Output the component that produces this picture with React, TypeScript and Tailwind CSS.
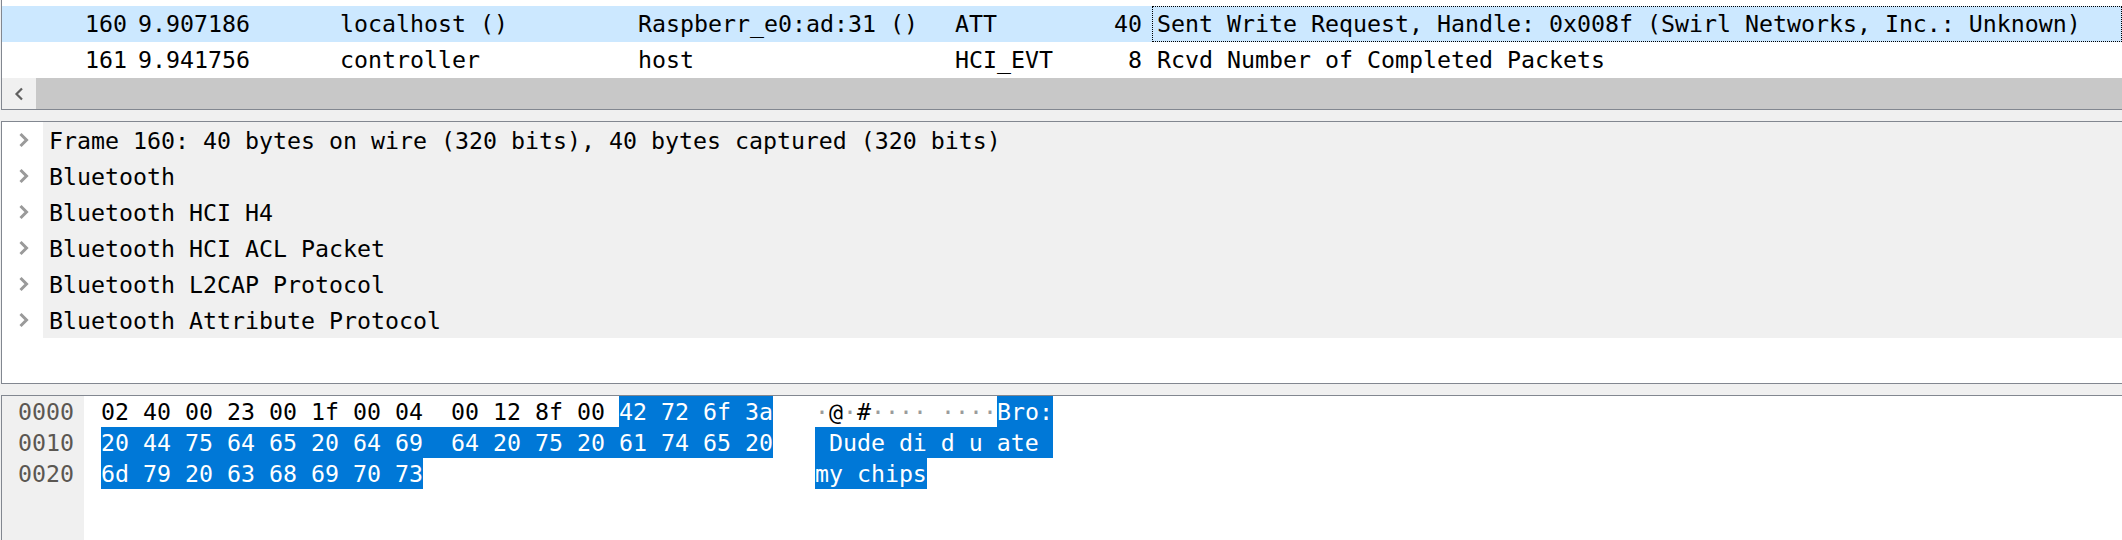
import React from "react"

type Packet = {
  no: string
  time: string
  src: string
  dst: string
  proto: string
  len: string
  info: string
  selected?: boolean
}

const packets: Packet[] = [
  {
    no: "160",
    time: "9.907186",
    src: "localhost ()",
    dst: "Raspberr_e0:ad:31 ()",
    proto: "ATT",
    len: "40",
    info: "Sent Write Request, Handle: 0x008f (Swirl Networks, Inc.: Unknown)",
    selected: true,
  },
  {
    no: "161",
    time: "9.941756",
    src: "controller",
    dst: "host",
    proto: "HCI_EVT",
    len: "8",
    info: "Rcvd Number of Completed Packets",
  },
]

const tree = [
  "Frame 160: 40 bytes on wire (320 bits), 40 bytes captured (320 bits)",
  "Bluetooth",
  "Bluetooth HCI H4",
  "Bluetooth HCI ACL Packet",
  "Bluetooth L2CAP Protocol",
  "Bluetooth Attribute Protocol",
]

function Chevron() {
  return (
    <svg width="11" height="16" viewBox="0 0 11 16" className="shrink-0">
      <polyline points="2.5,2 8.5,8 2.5,14" fill="none" stroke="#9a9a9a" strokeWidth="3" />
    </svg>
  )
}

// selected byte chunk
function Sel({ children }: { children: React.ReactNode }) {
  return <span className="inline-block bg-[#0078d7] text-white leading-[31px]">{children}</span>
}

function Dot() {
  return <span className="text-[#9b9b9b]">·</span>
}

export default function App() {
  return (
    <div className="w-[2122px] h-[540px] overflow-hidden bg-[#f0f0f0] pl-[1px] flex flex-col font-['DejaVu_Sans_Mono',monospace] text-[23.25px] text-black">
      {/* packet list */}
      <div className="h-[110px] bg-white border-l border-b border-[#828790] flex flex-col">
        <div className="h-[6px]" />
        {packets.map((p) => (
          <div
            key={p.no}
            className={`flex h-[36px] leading-[34px] whitespace-pre ${p.selected ? "bg-[#cce8ff]" : "bg-white"}`}
          >
            <div className="w-[125px] text-right leading-[36px]">{p.no}</div>
            <div className="w-[213px] pl-[11px] leading-[36px]">{p.time}</div>
            <div className="w-[298px] leading-[36px]">{p.src}</div>
            <div className="w-[317px] leading-[36px]">{p.dst}</div>
            <div className="w-[105px] leading-[36px]">{p.proto}</div>
            <div className="w-[82px] text-right leading-[36px]">{p.len}</div>
            <div
              className={`ml-[10px] flex-1 pl-[4px] border border-dotted ${p.selected ? "border-black" : "border-transparent"}`}
            >
              {p.info}
            </div>
          </div>
        ))}
        <div className="h-[31px] flex">
          <div className="w-[34px] bg-[#f0f0f0] flex items-center justify-center">
            <svg width="11" height="14" viewBox="0 0 11 14">
              <polyline points="8,1.5 2.5,7 8,12.5" fill="none" stroke="#606060" strokeWidth="2.2" />
            </svg>
          </div>
          <div className="flex-1 bg-[#c8c8c8]" />
        </div>
      </div>

      <div className="h-[11px]" />

      {/* packet details */}
      <div className="h-[263px] bg-white border-l border-t border-b border-[#828790]">
        {tree.map((t) => (
          <div key={t} className="flex h-[36px] items-center">
            <div className="w-[41px] flex items-center pl-[16px]">
              <Chevron />
            </div>
            <div className="flex-1 h-full bg-[#f0f0f0] pl-[6px] leading-[37px] whitespace-pre">{t}</div>
          </div>
        ))}
      </div>

      <div className="h-[11px]" />

      {/* packet bytes */}
      <div className="flex-1 bg-white border-l border-t border-[#828790] flex">
        <div className="w-[82px] bg-[#f0f0f0] pl-[16px] text-[#5b5752] leading-[31px]">
          <div>0000</div>
          <div>0010</div>
          <div>0020</div>
        </div>
        <div className="pl-[17px] leading-[31px] whitespace-pre">
          <div className="h-[31px]">
            {"02 40 00 23 00 1f 00 04  00 12 8f 00 "}
            <Sel>42 72 6f 3a</Sel>
            {"   "}
            <Dot />@<Dot />#<Dot /><Dot /><Dot /><Dot />{" "}
            <Dot /><Dot /><Dot /><Dot />
            <Sel>Bro:</Sel>
          </div>
          <div className="h-[31px]">
            <Sel>20 44 75 64 65 20 64 69  64 20 75 20 61 74 65 20</Sel>
            {"   "}
            <Sel>{" Dude di d u ate "}</Sel>
          </div>
          <div className="h-[31px]">
            <Sel>6d 79 20 63 68 69 70 73</Sel>
            {"                            "}
            <Sel>my chips</Sel>
          </div>
        </div>
      </div>
    </div>
  )
}
